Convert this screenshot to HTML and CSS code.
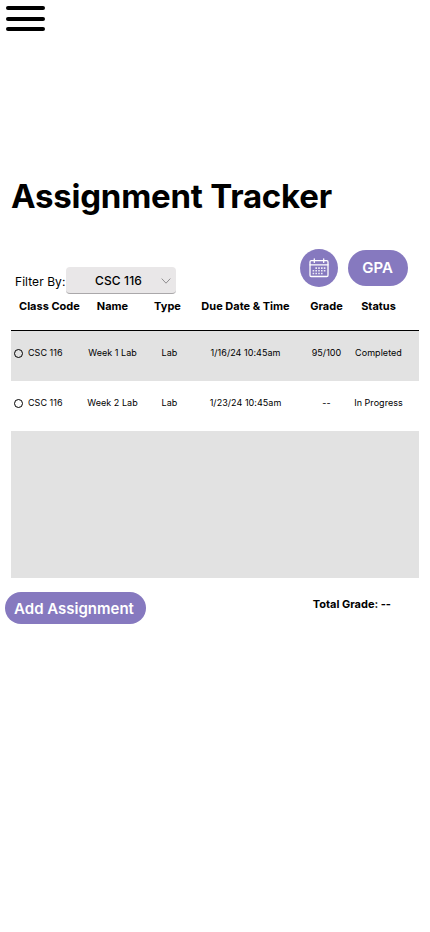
FILE: index.html
```html
<!DOCTYPE html>
<html lang="en">
<head>
<meta charset="utf-8">
<title>Assignment Tracker</title>
<link rel="stylesheet" href="styles.css">
</head>
<body>
<header class="topbar">
  <button class="menu" aria-label="Menu"><span></span><span></span><span></span></button>
</header>
<main>
  <h1 class="title">Assignment Tracker</h1>
  <div class="toolbar">
    <div class="filter">
      <span class="filter-label">Filter By:</span>
      <button class="select"><span>CSC 116</span>
        <svg class="chevron" width="10" height="6" viewBox="0 0 10 6"><path d="M.7.6 5 5.2 9.3.6" fill="none" stroke="#8f8d8f" stroke-width="1"/></svg>
      </button>
    </div>
    <div class="actions">
      <button class="calendar" aria-label="Calendar">
        <svg width="20" height="20" viewBox="0 0 20 20" fill="none" stroke="#fff" stroke-width="1.3" stroke-linecap="round">
          <rect x="1" y="2.7" width="18" height="15.8" rx="1.2"/>
          <path d="M1 6.8H19M5.3 .8V4.4M14.7 .8V4.4"/>
          <path d="M6.4 10.1H17M3.6 12.8H17M3.6 15.5H14.2" stroke-width="1.6" stroke-dasharray="1.6 1.2" stroke-linecap="butt" stroke-opacity=".85"/>
        </svg>
      </button>
      <button class="gpa">GPA</button>
    </div>
  </div>
  <section class="table">
    <div class="row head"><span class="code">Class Code</span><span>Name</span><span class="type">Type</span><span>Due Date &amp; Time</span><span>Grade</span><span>Status</span></div>
    <div class="row item shaded"><span class="code"><i class="check"></i>CSC 116</span><span>Week 1 Lab</span><span>Lab</span><span>1/16/24 10:45am</span><span>95/100</span><span>Completed</span></div>
    <div class="row item"><span class="code"><i class="check"></i>CSC 116</span><span>Week 2 Lab</span><span>Lab</span><span>1/23/24 10:45am</span><span>--</span><span>In Progress</span></div>
    <div class="empty shaded"></div>
  </section>
  <footer class="footer">
    <button class="add">Add Assignment</button>
    <strong class="total">Total Grade: --</strong>
  </footer>
</main>
</body>
</html>
```
FILE: styles.css
```css
* { box-sizing: border-box; }
body { margin: 0; background: #fff; color: #000; font-family: Inter, sans-serif; }
button { border: 0; padding: 0; margin: 0; font: inherit; color: inherit; }
.topbar { height: 176px; padding: 6px; }
.menu { display: flex; flex-direction: column; justify-content: space-between; width: 39px; height: 25px; background: none; }
.menu span { height: 4px; width: 100%; border-radius: 2px; background: #000; }
.title { margin: 0 0 0 11px; height: 73px; font-size: 33px; line-height: 40px; font-weight: 700; letter-spacing: -.23px; white-space: nowrap; }
.toolbar { display: flex; justify-content: space-between; height: 45px; padding: 0 22px 0 15px; }
.filter { display: flex; align-items: center; align-self: flex-end; height: 27px; }
.filter-label { width: 51px; font-size: 12px; line-height: 15px; padding-top: 1px; letter-spacing: .06px; white-space: nowrap; }
.select { display: flex; align-items: center; justify-content: space-between; width: 110px; height: 27px; padding: 0 5px 0 29px; border-radius: 4px; background: #e9e7e8; border-bottom: 1px solid #aaa8aa; font-size: 12px; font-weight: 500; letter-spacing: .12px; }
.chevron { margin-top: 2px; }
.actions { display: flex; gap: 10px; color: #fff; }
.calendar { display: flex; align-items: center; justify-content: center; width: 38px; height: 38px; border-radius: 50%; background: #8679bf; }
.gpa { width: 60px; height: 36px; margin-top: 1px; padding: 0 1px 2px 0; border-radius: 18px; background: #8679bf; font-size: 15px; font-weight: 600; }
.table { margin: 0 11px; }
.row { display: grid; grid-template-columns: 65px 73px 41px 111px 51px 53px; align-items: center; white-space: nowrap; }
.row > span { display: flex; justify-content: center; align-items: center; }
.head { height: 37px; padding-bottom: 12px; border-bottom: 1px solid #000; font-size: 11px; font-weight: 700; }
.row > .code { justify-content: flex-start; padding-left: 3px; }
.head > .code { padding-left: 8px; }
.head > .type { margin-left: -4px; }
.item { height: 50px; padding-bottom: 7px; font-size: 9px; letter-spacing: .04px; }
.check { width: 9px; height: 9px; margin: 2px 5px 0 0; border: 1px solid #000; border-radius: 50%; }
.shaded { background: #e2e2e2; }
.empty { height: 147px; }
.footer { display: flex; justify-content: space-between; padding: 14px 39px 0 5px; }
.add { width: 141px; height: 32px; padding-right: 3px; border-radius: 16px; background: #8679bf; color: #fff; font-size: 15px; font-weight: 600; }
.total { margin-top: 5px; font-size: 11px; line-height: 14px; }
```
